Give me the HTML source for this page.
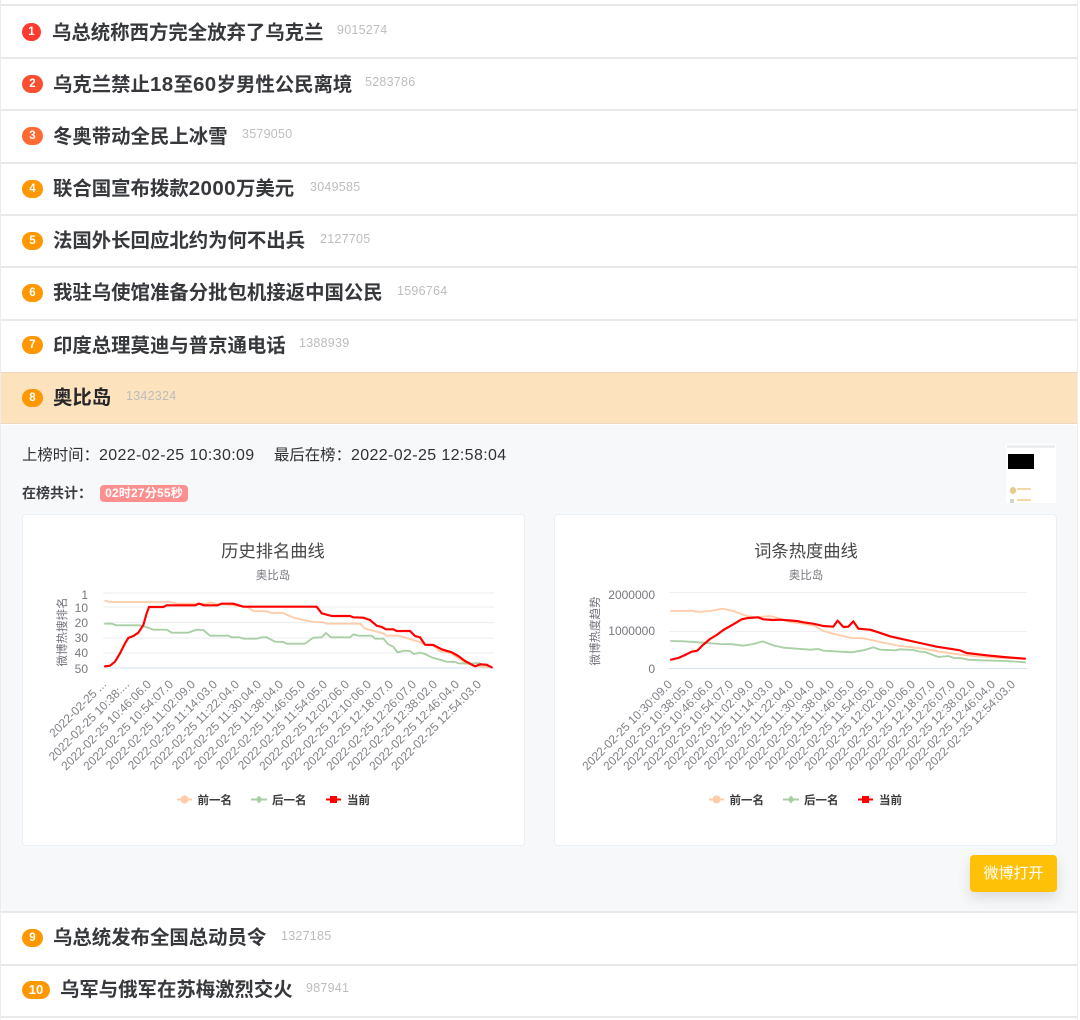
<!DOCTYPE html>
<html lang="zh"><head><meta charset="utf-8"><title>微博热搜</title>
<style>
html,body{margin:0;padding:0;background:#fff}
body{position:relative;width:1080px;height:1020px;overflow:hidden;font-family:"Liberation Sans","Noto Sans CJK SC",sans-serif;color:#303133}
#w{position:absolute;left:0;top:0;width:1080px;height:1020px;filter:blur(.35px)}
.a{position:absolute;white-space:nowrap}
.line{position:absolute;left:1px;width:1076px;height:2px;background:#e9e9e9}
.b{position:absolute;height:18px;line-height:18px;border-radius:9px;background:#ff9800;color:#fff;font-size:11.5px;font-weight:700;text-align:center;left:22px}
.t{position:absolute;white-space:nowrap;font-size:19.4px;font-weight:700;line-height:26px;color:#36383b}
.t span{font-size:20.5px;letter-spacing:.4px}
.c{position:absolute;white-space:nowrap;font-size:12.5px;line-height:16px;color:#bdbdbd;letter-spacing:.25px}
.d{font-size:16px;letter-spacing:.37px}
</style></head><body><div id="w">
<div class="a" style="left:0;top:0;width:1px;height:1020px;background:#ececec"></div>
<div class="a" style="left:1077px;top:0;width:1px;height:1020px;background:#ececec"></div>
<div class="line" style="top:4px"></div>
<div class="line" style="top:57px"></div>
<div class="line" style="top:109px"></div>
<div class="line" style="top:162px"></div>
<div class="line" style="top:214px"></div>
<div class="line" style="top:266px"></div>
<div class="line" style="top:319px"></div>

<div class="b" style="top:23px;width:19px;background:#ff3b30">1</div><div class="t" style="left:52px;top:20px">乌总统称西方完全放弃了乌克兰</div><div class="c" style="left:337px;top:22px">9015274</div>
<div class="b" style="top:75px;width:21px;background:#fb4f32">2</div><div class="t" style="left:53px;top:72px">乌克兰禁止<span>18</span>至<span>60</span>岁男性公民离境</div><div class="c" style="left:365px;top:74px">5283786</div>
<div class="b" style="top:127px;width:21px;background:#ff6a33">3</div><div class="t" style="left:53px;top:124px">冬奥带动全民上冰雪</div><div class="c" style="left:242px;top:126px">3579050</div>
<div class="b" style="top:180px;width:21px">4</div><div class="t" style="left:53px;top:176px">联合国宣布拨款<span>2000</span>万美元</div><div class="c" style="left:310px;top:179px">3049585</div>
<div class="b" style="top:232px;width:21px">5</div><div class="t" style="left:53px;top:228px">法国外长回应北约为何不出兵</div><div class="c" style="left:320px;top:231px">2127705</div>
<div class="b" style="top:284px;width:21px">6</div><div class="t" style="left:53px;top:280px">我驻乌使馆准备分批包机接返中国公民</div><div class="c" style="left:397px;top:283px">1596764</div>
<div class="b" style="top:336px;width:21px">7</div><div class="t" style="left:53px;top:333px">印度总理莫迪与普京通电话</div><div class="c" style="left:299px;top:335px">1388939</div>

<div class="a" style="left:1px;top:372px;width:1076px;height:52px;background:#fde2be;border-top:1px solid #eed8bb;border-bottom:1px solid #eed8bb;box-sizing:border-box"></div>
<div class="b" style="top:389px;width:21px">8</div><div class="t" style="left:53px;top:385px;color:#25272a">奥比岛</div><div class="c" style="left:126px;top:388px">1342324</div>

<div class="a" style="left:1px;top:425px;width:1076px;height:486px;background:#f6f8fa;border-radius:3px"></div>
<div class="a" style="left:22px;top:447px;font-size:15.4px;line-height:18px;color:#303133">上榜时间：<span class="d">2022-02-25 10:30:09</span></div>
<div class="a" style="left:274px;top:447px;font-size:15.4px;line-height:18px;color:#303133">最后在榜：<span class="d">2022-02-25 12:58:04</span></div>
<div class="a" style="left:22px;top:484px;font-size:14px;line-height:18px;font-weight:700;color:#3a3c40">在榜共计：</div>
<div class="a" style="left:100px;top:485px;width:88px;height:17px;line-height:17px;border-radius:4px;background:#fe8f8f;color:#fff;font-size:12px;font-weight:700;text-align:center;letter-spacing:.2px">02时27分55秒</div>

<div class="a" style="left:1006px;top:444px;width:50px;height:59px;background:#fff"></div>
<div class="a" style="left:1008px;top:454px;width:26px;height:15px;background:#000"></div>
<div class="a" style="left:1007px;top:445px;width:48px;height:3px;background:#eceff1"></div>
<div class="a" style="left:1010px;top:487px;width:6px;height:7px;background:#e8c98e;border-radius:3px"></div>
<div class="a" style="left:1017px;top:488px;width:14px;height:2px;background:#f4d9a8"></div>
<div class="a" style="left:1017px;top:499px;width:14px;height:2px;background:#f4d9a8"></div>
<div class="a" style="left:1010px;top:499px;width:4px;height:4px;background:#cfd8c4"></div>

<div class="a" style="left:22px;top:514px;width:503px;height:332px;box-sizing:border-box;background:#fff;border:1px solid #ebeef5;border-radius:4px"></div>
<div class="a" style="left:554px;top:514px;width:503px;height:332px;box-sizing:border-box;background:#fff;border:1px solid #ebeef5;border-radius:4px"></div>

<svg class="a" style="left:0;top:0" width="1080" height="1020" viewBox="0 0 1080 1020" font-family="'Liberation Sans','Noto Sans CJK SC',sans-serif">
<g fill="#464646" font-size="17.3" text-anchor="middle"><text x="273" y="557">历史排名曲线</text><text x="806" y="557">词条热度曲线</text></g>
<g fill="#77787f" font-size="11.5" text-anchor="middle"><text x="273" y="579">奥比岛</text><text x="806" y="579">奥比岛</text></g>
<g stroke="#eef0f4" stroke-width="1.2">
<path d="M103 593H494M103 607H494M103 622.500H494M103 638H494M103 653H494"/>
<path d="M669 592.500H1027M669 631.500H1027"/>
</g>
<path d="M103 668H494M669 668.500H1027" stroke="#cfe0f2" stroke-width="1"/>
<g fill="#77787f" font-size="12" text-anchor="end">
<text x="88" y="599">1</text><text x="88" y="612">10</text><text x="88" y="627">20</text><text x="88" y="642">30</text><text x="88" y="657">40</text><text x="88" y="673">50</text>
<text x="655" y="599">2000000</text><text x="655" y="635">1000000</text><text x="655" y="673">0</text>
</g>
<g fill="#6e7079" font-size="11.500" text-anchor="middle">
<text transform="translate(66 632) rotate(-90)">微博热搜排名</text>
<text transform="translate(599 631) rotate(-90)">微博热度趋势</text>
</g>
<g transform="translate(30 530) scale(.33333)" fill="none" stroke-width="5.5" stroke-linejoin="round" stroke-linecap="round">
<polyline stroke="#ffccaa" points="225,212 238,216 420,216 440,221 530,221 540,217 560,222 600,225 650,230 670,243 710,244 725,249 760,249 790,263 820,270 850,276 880,277 890,281 990,281 1005,296 1060,310 1070,317 1105,317 1135,326 1175,338 1185,344 1210,347 1230,364 1260,368 1285,385 1310,400 1335,408 1385,412"/>
<polyline stroke="#a9cfa4" points="225,281 245,281 260,286 330,286 345,290 370,299 410,299 425,308 475,308 500,299 520,300 540,317 595,317 605,322 630,322 640,326 680,326 695,322 710,322 735,335 760,336 770,341 825,341 850,323 875,322 888,309 903,322 960,322 970,313 985,317 1025,317 1035,326 1060,326 1075,343 1090,350 1102,367 1125,362 1140,363 1152,372 1170,368 1185,372 1205,382 1250,395 1275,396 1285,400 1320,401 1345,399 1385,412"/>
<polyline stroke="#ff0000" stroke-width="6.500" points="225,409 240,407 255,395 270,370 285,340 295,324 310,318 325,308 340,285 350,250 357,231 400,231 410,226 495,226 507,221 522,226 562,226 575,221 610,221 640,230 860,230 875,250 905,258 960,258 970,262 1000,263 1020,270 1040,287 1055,291 1068,298 1090,298 1100,303 1140,303 1155,318 1170,322 1185,344 1210,345 1235,358 1265,367 1285,378 1305,393 1335,409 1350,403 1370,404 1385,412"/>
</g>
<g transform="translate(570 530) scale(.33333)" fill="none" stroke-width="5.500" stroke-linejoin="round" stroke-linecap="round">
<polyline stroke="#ffccaa" points="303,243 365,242 385,246 420,243 458,236 490,243 530,258 560,262 600,258 620,263 660,276 700,281 735,288 760,303 800,314 845,324 880,325 930,336 990,348 1060,356 1110,365 1150,371 1180,375 1200,377 1280,383 1365,386"/>
<polyline stroke="#a9cfa4" points="303,333 340,334 400,338 450,342 490,343 520,347 550,342 578,334 610,346 640,353 720,359 745,357 760,362 845,367 880,361 910,352 930,359 975,361 990,358 1030,360 1050,365 1065,366 1105,381 1135,378 1152,384 1170,384 1195,389 1230,391 1310,393 1365,397"/>
<polyline stroke="#ff0000" stroke-width="6.500" points="303,389 325,384 345,375 365,365 382,362 400,344 420,327 440,315 460,300 490,283 515,268 535,264 565,262 580,268 610,270 630,269 680,273 700,277 730,281 760,288 790,290 803,272 820,291 835,290 850,274 865,296 900,299 925,307 960,319 1000,328 1050,339 1100,350 1170,361 1190,369 1250,376 1300,381 1365,386"/>
</g>
<g fill="#808187" font-size="12" text-anchor="end">
<text transform="translate(107 685) rotate(-45)">2022-02-25 ...</text>
<text transform="translate(130 685) rotate(-45)">2022-02-25 10:38:...</text>
<text transform="translate(152 685) rotate(-45)">2022-02-25 10:46:06.0</text>
<text transform="translate(174 685) rotate(-45)">2022-02-25 10:54:07.0</text>
<text transform="translate(196 685) rotate(-45)">2022-02-25 11:02:09.0</text>
<text transform="translate(218 685) rotate(-45)">2022-02-25 11:14:03.0</text>
<text transform="translate(240 685) rotate(-45)">2022-02-25 11:22:04.0</text>
<text transform="translate(262 685) rotate(-45)">2022-02-25 11:30:04.0</text>
<text transform="translate(284 685) rotate(-45)">2022-02-25 11:38:04.0</text>
<text transform="translate(306 685) rotate(-45)">2022-02-25 11:46:05.0</text>
<text transform="translate(328 685) rotate(-45)">2022-02-25 11:54:05.0</text>
<text transform="translate(350 685) rotate(-45)">2022-02-25 12:02:06.0</text>
<text transform="translate(372 685) rotate(-45)">2022-02-25 12:10:06.0</text>
<text transform="translate(394 685) rotate(-45)">2022-02-25 12:18:07.0</text>
<text transform="translate(417 685) rotate(-45)">2022-02-25 12:26:07.0</text>
<text transform="translate(438 685) rotate(-45)">2022-02-25 12:38:02.0</text>
<text transform="translate(460 685) rotate(-45)">2022-02-25 12:46:04.0</text>
<text transform="translate(482 685) rotate(-45)">2022-02-25 12:54:03.0</text>
<text transform="translate(673 685) rotate(-45)">2022-02-25 10:30:09.0</text>
<text transform="translate(694 685) rotate(-45)">2022-02-25 10:38:05.0</text>
<text transform="translate(714 685) rotate(-45)">2022-02-25 10:46:06.0</text>
<text transform="translate(734 685) rotate(-45)">2022-02-25 10:54:07.0</text>
<text transform="translate(754 685) rotate(-45)">2022-02-25 11:02:09.0</text>
<text transform="translate(774 685) rotate(-45)">2022-02-25 11:14:03.0</text>
<text transform="translate(794 685) rotate(-45)">2022-02-25 11:22:04.0</text>
<text transform="translate(815 685) rotate(-45)">2022-02-25 11:30:04.0</text>
<text transform="translate(835 685) rotate(-45)">2022-02-25 11:38:04.0</text>
<text transform="translate(855 685) rotate(-45)">2022-02-25 11:46:05.0</text>
<text transform="translate(875 685) rotate(-45)">2022-02-25 11:54:05.0</text>
<text transform="translate(895 685) rotate(-45)">2022-02-25 12:02:06.0</text>
<text transform="translate(916 685) rotate(-45)">2022-02-25 12:10:06.0</text>
<text transform="translate(936 685) rotate(-45)">2022-02-25 12:18:07.0</text>
<text transform="translate(956 685) rotate(-45)">2022-02-25 12:26:07.0</text>
<text transform="translate(976 685) rotate(-45)">2022-02-25 12:38:02.0</text>
<text transform="translate(996 685) rotate(-45)">2022-02-25 12:46:04.0</text>
<text transform="translate(1016 685) rotate(-45)">2022-02-25 12:54:03.0</text>
</g>
<g>
<path d="M177 799.500H192" stroke="#ffccaa" stroke-width="2"/><circle cx="184.500" cy="799.500" r="4" fill="#ffccaa"/>
<path d="M251 799.500H267" stroke="#a9cfa4" stroke-width="2"/><path d="M259 795.500l3.500 4-3.500 4-3.500-4z" fill="#a9cfa4"/>
<path d="M326 799.500H341" stroke="#ff0000" stroke-width="2"/><rect x="330" y="796" width="7" height="7" fill="#ff0000"/>
<path d="M709 799.500H724" stroke="#ffccaa" stroke-width="2"/><circle cx="716.500" cy="799.500" r="4" fill="#ffccaa"/>
<path d="M783 799.500H799" stroke="#a9cfa4" stroke-width="2"/><path d="M791 795.500l3.500 4-3.500 4-3.500-4z" fill="#a9cfa4"/>
<path d="M858 799.500H873" stroke="#ff0000" stroke-width="2"/><rect x="862" y="796" width="7" height="7" fill="#ff0000"/>
</g>
<g fill="#3c3c3c" font-size="11.500" font-weight="700">
<text x="197.500" y="804">前一名</text><text x="272" y="804">后一名</text><text x="347" y="804">当前</text>
<text x="729.500" y="804">前一名</text><text x="804" y="804">后一名</text><text x="879" y="804">当前</text>
</g>
</svg>

<div class="a" style="left:970px;top:855px;width:87px;height:37px;line-height:37px;border-radius:4px;background:#ffc107;color:#fff;font-size:15px;text-align:center;box-shadow:0 6px 14px rgba(0,0,0,.12)">微博打开</div>

<div class="line" style="top:911px"></div>
<div class="line" style="top:964px"></div>
<div class="line" style="top:1016px"></div>
<div class="b" style="top:929px;width:21px">9</div><div class="t" style="left:53px;top:925px">乌总统发布全国总动员令</div><div class="c" style="left:281px;top:928px">1327185</div>
<div class="b" style="top:981px;width:28px;font-size:13px">10</div><div class="t" style="left:60px;top:977px">乌军与俄军在苏梅激烈交火</div><div class="c" style="left:306px;top:980px">987941</div>
</div></body></html>
